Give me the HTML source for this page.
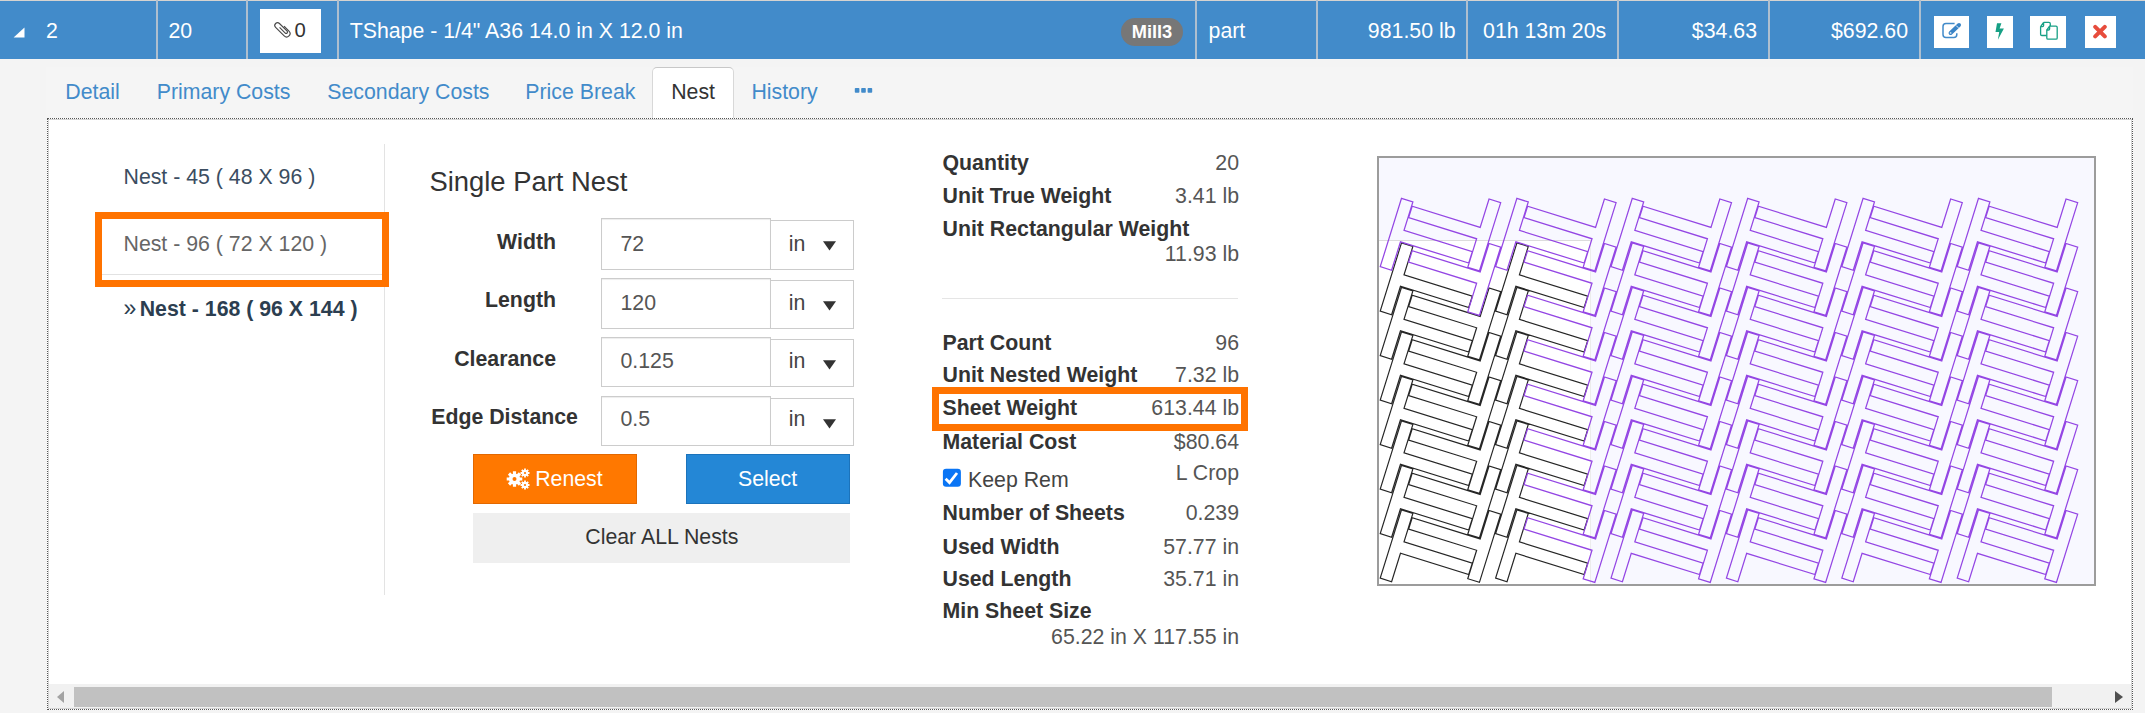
<!DOCTYPE html>
<html><head><meta charset="utf-8"><style>
html,body{margin:0;padding:0;width:2145px;height:713px;overflow:hidden;background:#f4f4f4}
body{position:relative;font-family:"Liberation Sans",sans-serif}
.t{position:absolute;white-space:nowrap}
.b{position:absolute}
</style></head><body>
<div class="b" style="left:0px;top:0px;width:2145px;height:1px;background:#d6d3d0"></div>
<div class="b" style="left:0px;top:1px;width:2145px;height:58px;background:#428bca"></div>
<div class="b" style="left:155.5px;top:0px;width:2.0px;height:59px;background:#aebfcf"></div>
<div class="b" style="left:246px;top:0px;width:2px;height:59px;background:#aebfcf"></div>
<div class="b" style="left:336.5px;top:0px;width:2.0px;height:59px;background:#aebfcf"></div>
<div class="b" style="left:1194.5px;top:0px;width:2.0px;height:59px;background:#aebfcf"></div>
<div class="b" style="left:1315.5px;top:0px;width:2.0px;height:59px;background:#aebfcf"></div>
<div class="b" style="left:1466px;top:0px;width:2px;height:59px;background:#aebfcf"></div>
<div class="b" style="left:1617px;top:0px;width:2px;height:59px;background:#aebfcf"></div>
<div class="b" style="left:1767.5px;top:0px;width:2.0px;height:59px;background:#aebfcf"></div>
<div class="b" style="left:1919px;top:0px;width:2px;height:59px;background:#aebfcf"></div>
<svg class="b" style="left:13px;top:27px" width="13" height="12"><polygon points="11.5,0.5 11.5,10.6 0.6,10.6" fill="#fff"/></svg>
<div class="t" style="left:46px;top:17.92px;font-size:21.3px;line-height:26px;font-weight:400;color:#fff;">2</div>
<div class="t" style="left:168.5px;top:17.92px;font-size:21.3px;line-height:26px;font-weight:400;color:#fff;">20</div>
<div class="b" style="left:260px;top:9px;width:61px;height:44px;background:#fff"></div>
<svg class="b" style="left:271px;top:19px" width="24" height="22" viewBox="0 0 24 22"><g transform="translate(11.3 10.2) rotate(-45) scale(0.92)"><path d="M-0.7 -3.5 V5.2 A1.45 1.45 0 0 0 2.2 5.2 V-6.6 A2.95 2.95 0 0 0 -3.7 -6.6 V6.6 A3.7 3.7 0 0 0 3.7 6.6 V-1" fill="none" stroke="#4a4a4a" stroke-width="1.25"/></g></svg>
<div class="t" style="left:294.4px;top:17.77px;font-size:20.29px;line-height:24px;font-weight:400;color:#333;">0</div>
<div class="t" style="left:349.7px;top:17.92px;font-size:21.3px;line-height:26px;font-weight:400;color:#fff;">TShape - 1/4&quot; A36 14.0 in X 12.0 in</div>
<div class="b" style="left:1121px;top:18px;width:62px;height:28px;background:#777;border-radius:14px"></div>
<div class="t" style="left:1121px;width:62px;text-align:center;top:21.47px;font-size:18.26px;line-height:22px;font-weight:700;color:#fff;">Mill3</div>
<div class="t" style="left:1208.6px;top:17.92px;font-size:21.3px;line-height:26px;font-weight:400;color:#fff;">part</div>
<div class="t" style="right:689.5px;top:18.12px;font-size:21.3px;line-height:26px;font-weight:400;color:#fff;">981.50 lb</div>
<div class="t" style="right:538.8px;top:18.12px;font-size:21.3px;line-height:26px;font-weight:400;color:#fff;">01h 13m 20s</div>
<div class="t" style="right:388px;top:18.12px;font-size:21.3px;line-height:26px;font-weight:400;color:#fff;">$34.63</div>
<div class="t" style="right:237px;top:18.12px;font-size:21.3px;line-height:26px;font-weight:400;color:#fff;">$692.60</div>
<div class="b" style="left:1934px;top:16px;width:35px;height:32px;background:#fff"></div>
<div class="b" style="left:1987px;top:16px;width:26px;height:32px;background:#fff"></div>
<div class="b" style="left:2030px;top:16px;width:36px;height:32px;background:#fff"></div>
<div class="b" style="left:2085px;top:16px;width:31px;height:32px;background:#fff"></div>
<svg class="b" style="left:1940px;top:21px" width="24" height="19" viewBox="0 0 24 19"><path d="M14.6 2.6 H6 Q3 2.6 3 5.6 V13.4 Q3 16.4 6 16.4 H13.8 Q16.8 16.4 16.8 13.4 V12.2" fill="none" stroke="#428bca" stroke-width="1.5"/><path d="M10.6 12.0 L19.0 4.0" stroke="#3a84c6" stroke-width="4" stroke-linecap="round"/><path d="M16.2 4.6 L18.4 6.8" stroke="#fff" stroke-width="0.9"/><circle cx="10.6" cy="11.9" r="0.9" fill="#cde"/></svg>
<svg class="b" style="left:1993px;top:22px" width="14" height="19" viewBox="0 0 14 19"><path d="M4 1.3 H8.4 L6.6 6.4 H10.9 L4.9 17.8 L6.2 9.9 H2.5 Z" fill="#16a085"/></svg>
<svg class="b" style="left:2038px;top:20px" width="22" height="22" viewBox="0 0 22 22"><g fill="none" stroke="#16a085" stroke-width="1.3"><path d="M5.6 2.4 H10.9 Q12.3 2.4 12.3 3.8 V6.2 M2.6 6.6 L5.6 2.4 M2.6 6.6 V14.3 Q2.6 15.5 3.8 15.5 H8.8 M2.6 6.6 H4.5 Q5.6 6.6 5.6 5.5 V2.4"/></g><path d="M11.6 6.2 H18 Q19.2 6.2 19.2 7.4 V17.9 Q19.2 19.1 18 19.1 H10 Q8.8 19.1 8.8 17.9 V10 Z" fill="#fff" stroke="#16a085" stroke-width="1.3"/><path d="M8.8 10 H10.5 Q11.6 10 11.6 8.9 V6.2" fill="none" stroke="#16a085" stroke-width="1.3"/></svg>
<svg class="b" style="left:2092px;top:24px" width="16" height="15" viewBox="0 0 16 15"><path d="M3.2 2.8 L12.8 12.4 M12.8 2.8 L3.2 12.4" stroke="#e74c3c" stroke-width="4" stroke-linecap="round"/></svg>
<div class="b" style="left:0px;top:59px;width:2145px;height:654px;background:#f4f4f4"></div>
<div class="b" style="left:46px;top:67px;width:2087px;height:52px;background:#f5f5f5"></div>
<div class="t" style="left:65.3px;top:78.62px;font-size:21.3px;line-height:26px;font-weight:400;color:#428bca;">Detail</div>
<div class="t" style="left:156.7px;top:78.62px;font-size:21.3px;line-height:26px;font-weight:400;color:#428bca;">Primary Costs</div>
<div class="t" style="left:327.3px;top:78.62px;font-size:21.3px;line-height:26px;font-weight:400;color:#428bca;">Secondary Costs</div>
<div class="t" style="left:525.3px;top:78.62px;font-size:21.3px;line-height:26px;font-weight:400;color:#428bca;">Price Break</div>
<div class="b" style="left:652px;top:67px;width:82px;height:53px;background:#fff;border:1px solid #d8d8d8;border-bottom:none;border-radius:5px 5px 0 0;box-sizing:border-box;border-top-color:#c8c8c8"></div>
<div class="t" style="left:671.2px;top:78.62px;font-size:21.3px;line-height:26px;font-weight:400;color:#333;">Nest</div>
<div class="t" style="left:751.4px;top:78.62px;font-size:21.3px;line-height:26px;font-weight:400;color:#428bca;">History</div>
<svg class="b" style="left:854px;top:87px" width="20" height="7"><rect x="0.8" y="1" width="4.6" height="4.8" rx="0.8" fill="#428bca"/><rect x="7.2" y="1" width="4.6" height="4.8" rx="0.8" fill="#428bca"/><rect x="13.6" y="1" width="4.6" height="4.8" rx="0.8" fill="#428bca"/></svg>
<div class="b" style="left:47px;top:118px;width:2086px;height:592px;background:#fff;border:1px dotted #555;box-sizing:border-box"></div>
<div class="b" style="left:48px;top:119px;width:2084px;height:590px;border:1px solid #d4d4d4;box-sizing:border-box"></div>
<div class="b" style="left:49px;top:684px;width:2082px;height:24px;background:#f1f1f1"></div>
<div class="b" style="left:73.5px;top:687px;width:1978.5px;height:20px;background:#c1c1c1"></div>
<svg class="b" style="left:56px;top:690px" width="10" height="14"><polygon points="8,1 8,13 1,7" fill="#a3a3a3"/></svg>
<svg class="b" style="left:2114px;top:690px" width="10" height="14"><polygon points="1,1 1,13 9,7" fill="#505050"/></svg>
<div class="t" style="left:123.5px;top:164.12px;font-size:21.3px;line-height:26px;font-weight:400;color:#3b4d61;">Nest - 45 ( 48 X 96 )</div>
<div class="b" style="left:102px;top:273.5px;width:280px;height:1.0px;background:#e2e2e2"></div>
<div class="t" style="left:123.5px;top:230.52px;font-size:21.3px;line-height:26px;font-weight:400;color:#666;">Nest - 96 ( 72 X 120 )</div>
<div class="t" style="left:123.5px;top:295.42px;font-size:21.3px;line-height:26px;font-weight:700;color:#2c3e50;"><span style="font-weight:400;font-size:23px;letter-spacing:-2.5px">&raquo;</span> Nest - 168 ( 96 X 144 )</div>
<div class="b" style="left:384px;top:144px;width:1px;height:451px;background:#e3e3e3"></div>
<div class="b" style="left:95px;top:212px;width:294px;height:75px;border:7px solid #ff7300;box-sizing:border-box"></div>
<div class="t" style="left:429.5px;top:164.80px;font-size:27.39px;line-height:33px;font-weight:400;color:#333;">Single Part Nest</div>
<div class="t" style="right:1589px;top:228.62px;font-size:21.3px;line-height:26px;font-weight:700;color:#333;">Width</div>
<div class="b" style="left:601px;top:218px;width:169.5px;height:52px;background:#fff;border:1px solid #ccc;box-sizing:border-box;box-shadow:inset 0 1px 1px rgba(0,0,0,.075)"></div>
<div class="b" style="left:769.5px;top:219.5px;width:84.5px;height:50.5px;background:#fff;border:1px solid #ccc;box-sizing:border-box"></div>
<div class="t" style="left:620.5px;top:230.62px;font-size:21.3px;line-height:26px;font-weight:400;color:#555;">72</div>
<div class="t" style="left:788.7px;top:230.62px;font-size:21.3px;line-height:26px;font-weight:400;color:#444;">in</div>
<svg class="b" style="left:822.5px;top:241px" width="13" height="10"><polygon points="0,0.3 13,0.3 6.5,9.5" fill="#333"/></svg>
<div class="t" style="right:1589px;top:287.12px;font-size:21.3px;line-height:26px;font-weight:700;color:#333;">Length</div>
<div class="b" style="left:601px;top:278px;width:169.5px;height:51px;background:#fff;border:1px solid #ccc;box-sizing:border-box;box-shadow:inset 0 1px 1px rgba(0,0,0,.075)"></div>
<div class="b" style="left:769.5px;top:279.5px;width:84.5px;height:49.5px;background:#fff;border:1px solid #ccc;box-sizing:border-box"></div>
<div class="t" style="left:620.5px;top:289.62px;font-size:21.3px;line-height:26px;font-weight:400;color:#555;">120</div>
<div class="t" style="left:788.7px;top:289.62px;font-size:21.3px;line-height:26px;font-weight:400;color:#444;">in</div>
<svg class="b" style="left:822.5px;top:301px" width="13" height="10"><polygon points="0,0.3 13,0.3 6.5,9.5" fill="#333"/></svg>
<div class="t" style="right:1589px;top:346.32px;font-size:21.3px;line-height:26px;font-weight:700;color:#333;">Clearance</div>
<div class="b" style="left:601px;top:337px;width:169.5px;height:50px;background:#fff;border:1px solid #ccc;box-sizing:border-box;box-shadow:inset 0 1px 1px rgba(0,0,0,.075)"></div>
<div class="b" style="left:769.5px;top:338.5px;width:84.5px;height:48.5px;background:#fff;border:1px solid #ccc;box-sizing:border-box"></div>
<div class="t" style="left:620.5px;top:348.22px;font-size:21.3px;line-height:26px;font-weight:400;color:#555;">0.125</div>
<div class="t" style="left:788.7px;top:348.22px;font-size:21.3px;line-height:26px;font-weight:400;color:#444;">in</div>
<svg class="b" style="left:822.5px;top:360px" width="13" height="10"><polygon points="0,0.3 13,0.3 6.5,9.5" fill="#333"/></svg>
<div class="t" style="left:431.2px;top:403.62px;font-size:21.3px;line-height:26px;font-weight:700;color:#333;">Edge Distance</div>
<div class="b" style="left:601px;top:396px;width:169.5px;height:50px;background:#fff;border:1px solid #ccc;box-sizing:border-box;box-shadow:inset 0 1px 1px rgba(0,0,0,.075)"></div>
<div class="b" style="left:769.5px;top:397.5px;width:84.5px;height:48.5px;background:#fff;border:1px solid #ccc;box-sizing:border-box"></div>
<div class="t" style="left:620.5px;top:406.22px;font-size:21.3px;line-height:26px;font-weight:400;color:#555;">0.5</div>
<div class="t" style="left:788.7px;top:406.22px;font-size:21.3px;line-height:26px;font-weight:400;color:#444;">in</div>
<svg class="b" style="left:822.5px;top:419px" width="13" height="10"><polygon points="0,0.3 13,0.3 6.5,9.5" fill="#333"/></svg>
<div class="b" style="left:473px;top:454px;width:164px;height:50px;background:#ff7800;border:1px solid #e26800;box-sizing:border-box"></div>
<div class="b" style="left:685.5px;top:454px;width:164.0px;height:50px;background:#2487d6;border:1px solid #1b73bb;box-sizing:border-box"></div>
<div class="b" style="left:473px;top:513px;width:376.5px;height:50px;background:#efefef"></div>
<svg class="b" style="left:506px;top:468px" width="26" height="22" viewBox="0 0 26 22"><g fill="#fff"><circle cx="8.5" cy="11" r="5.6"/><g stroke="#fff" stroke-width="3.2" stroke-linecap="butt"><path d="M8.5 3.2 V18.8 M0.7 11 H16.3 M3 5.5 L14 16.5 M14 5.5 L3 16.5"/></g><circle cx="19" cy="5" r="3.2"/><g stroke="#fff" stroke-width="1.8"><path d="M19 0.5 V9.5 M14.5 5 H23.5 M15.8 1.8 L22.2 8.2 M22.2 1.8 L15.8 8.2"/></g><circle cx="19" cy="17" r="3.2"/><g stroke="#fff" stroke-width="1.8"><path d="M19 12.5 V21.5 M14.5 17 H23.5 M15.8 13.8 L22.2 20.2 M22.2 13.8 L15.8 20.2"/></g></g><circle cx="8.5" cy="11" r="2" fill="#ff7800"/><circle cx="19" cy="5" r="1.1" fill="#ff7800"/><circle cx="19" cy="17" r="1.1" fill="#ff7800"/></svg>
<div class="t" style="left:535.2px;top:466.02px;font-size:21.3px;line-height:26px;font-weight:400;color:#fff;">Renest</div>
<div class="t" style="left:738px;top:466.02px;font-size:21.3px;line-height:26px;font-weight:400;color:#fff;">Select</div>
<div class="t" style="left:585.3px;top:523.62px;font-size:21.3px;line-height:26px;font-weight:400;color:#333;">Clear ALL Nests</div>
<div class="t" style="left:942.5px;top:149.62px;font-size:21.3px;line-height:26px;font-weight:700;color:#333;">Quantity</div>
<div class="t" style="right:906px;top:149.62px;font-size:21.3px;line-height:26px;font-weight:400;color:#555;">20</div>
<div class="t" style="left:942.5px;top:183.02px;font-size:21.3px;line-height:26px;font-weight:700;color:#333;">Unit True Weight</div>
<div class="t" style="right:906px;top:183.02px;font-size:21.3px;line-height:26px;font-weight:400;color:#555;">3.41 lb</div>
<div class="t" style="left:942.5px;top:215.72px;font-size:21.3px;line-height:26px;font-weight:700;color:#333;">Unit Rectangular Weight</div>
<div class="t" style="right:906px;top:241.12px;font-size:21.3px;line-height:26px;font-weight:400;color:#555;">11.93 lb</div>
<div class="b" style="left:942px;top:297.5px;width:296px;height:1.0px;background:#e5e5e5"></div>
<div class="t" style="left:942.5px;top:330.22px;font-size:21.3px;line-height:26px;font-weight:700;color:#333;">Part Count</div>
<div class="t" style="right:906px;top:330.22px;font-size:21.3px;line-height:26px;font-weight:400;color:#555;">96</div>
<div class="t" style="left:942.5px;top:362.22px;font-size:21.3px;line-height:26px;font-weight:700;color:#333;">Unit Nested Weight</div>
<div class="t" style="right:906px;top:362.22px;font-size:21.3px;line-height:26px;font-weight:400;color:#555;">7.32 lb</div>
<div class="t" style="left:942.5px;top:394.62px;font-size:21.3px;line-height:26px;font-weight:700;color:#333;">Sheet Weight</div>
<div class="t" style="right:906px;top:394.62px;font-size:21.3px;line-height:26px;font-weight:400;color:#555;">613.44 lb</div>
<div class="b" style="left:932px;top:387px;width:316px;height:44px;border:7px solid #ff7300;box-sizing:border-box"></div>
<div class="t" style="left:942.5px;top:428.62px;font-size:21.3px;line-height:26px;font-weight:700;color:#333;">Material Cost</div>
<div class="t" style="right:906px;top:428.62px;font-size:21.3px;line-height:26px;font-weight:400;color:#555;">$80.64</div>
<svg class="b" style="left:942px;top:467.5px" width="20" height="20" viewBox="0 0 20 20"><rect x="0.9" y="0.7" width="18" height="18" rx="3.2" fill="#0a75f5"/><path d="M3.6 10.8 L7.5 14.6 L15 5" fill="none" stroke="#fff" stroke-width="2.8"/></svg>
<div class="t" style="left:968px;top:467.22px;font-size:21.3px;line-height:26px;font-weight:400;color:#444;">Keep Rem</div>
<div class="t" style="right:906px;top:459.92px;font-size:21.3px;line-height:26px;font-weight:400;color:#555;">L Crop</div>
<div class="t" style="left:942.5px;top:499.52px;font-size:21.3px;line-height:26px;font-weight:700;color:#333;">Number of Sheets</div>
<div class="t" style="right:906px;top:499.52px;font-size:21.3px;line-height:26px;font-weight:400;color:#555;">0.239</div>
<div class="t" style="left:942.5px;top:533.52px;font-size:21.3px;line-height:26px;font-weight:700;color:#333;">Used Width</div>
<div class="t" style="right:906px;top:533.52px;font-size:21.3px;line-height:26px;font-weight:400;color:#555;">57.77 in</div>
<div class="t" style="left:942.5px;top:566.22px;font-size:21.3px;line-height:26px;font-weight:700;color:#333;">Used Length</div>
<div class="t" style="right:906px;top:566.22px;font-size:21.3px;line-height:26px;font-weight:400;color:#555;">35.71 in</div>
<div class="t" style="left:942.5px;top:598.42px;font-size:21.3px;line-height:26px;font-weight:700;color:#333;">Min Sheet Size</div>
<div class="t" style="right:906px;top:623.52px;font-size:21.3px;line-height:26px;font-weight:400;color:#555;">65.22 in X 117.55 in</div>
<div class="b" style="left:1377px;top:156px;width:719px;height:430px;background:#f8f8ff;border:2px solid #9c9c9c;box-sizing:border-box"></div>
<div class="b" style="left:1379px;top:240.3px;width:212px;height:343.7px;background:#fff;border-top:1px solid #dcdcdc;border-right:1px solid #ececec;box-sizing:border-box"></div>
<svg class="b" style="left:1377px;top:156px" width="719" height="430" viewBox="0 0 719 430"><path d="M24.50 86.90 L35.88 90.44 L27.02 118.90 L95.30 140.16 L91.76 151.55 L23.47 130.28 L14.61 158.73 L3.23 155.18 Z M24.50 131.40 L35.88 134.94 L27.02 163.40 L95.30 184.66 L91.76 196.05 L23.47 174.78 L14.61 203.23 L3.23 199.68 Z M123.70 135.58 L102.43 203.86 L90.77 200.23 L99.63 171.78 L31.63 150.60 L35.17 139.22 L103.17 160.40 L112.04 131.95 Z M24.50 175.90 L35.88 179.44 L27.02 207.90 L95.30 229.16 L91.76 240.55 L23.47 219.28 L14.61 247.73 L3.23 244.18 Z M123.70 180.08 L102.43 248.36 L90.77 244.73 L99.63 216.28 L31.63 195.10 L35.17 183.72 L103.17 204.90 L112.04 176.45 Z M24.50 220.40 L35.88 223.94 L27.02 252.40 L95.30 273.66 L91.76 285.05 L23.47 263.78 L14.61 292.23 L3.23 288.68 Z M123.70 224.58 L102.43 292.86 L90.77 289.23 L99.63 260.78 L31.63 239.60 L35.17 228.22 L103.17 249.40 L112.04 220.95 Z M24.50 264.90 L35.88 268.44 L27.02 296.90 L95.30 318.16 L91.76 329.55 L23.47 308.28 L14.61 336.73 L3.23 333.18 Z M123.70 269.08 L102.43 337.36 L90.77 333.73 L99.63 305.28 L31.63 284.10 L35.17 272.72 L103.17 293.90 L112.04 265.45 Z M24.50 309.40 L35.88 312.94 L27.02 341.40 L95.30 362.66 L91.76 374.05 L23.47 352.78 L14.61 381.23 L3.23 377.68 Z M123.70 313.58 L102.43 381.86 L90.77 378.23 L99.63 349.78 L31.63 328.60 L35.17 317.22 L103.17 338.40 L112.04 309.95 Z M24.50 353.90 L35.88 357.44 L27.02 385.90 L95.30 407.16 L91.76 418.55 L23.47 397.28 L14.61 425.73 L3.23 422.18 Z M123.70 358.08 L102.43 426.36 L90.77 422.73 L99.63 394.28 L31.63 373.10 L35.17 361.72 L103.17 382.90 L112.04 354.45 Z M139.90 86.90 L151.28 90.44 L142.42 118.90 L210.70 140.16 L207.16 151.55 L138.87 130.28 L130.01 158.73 L118.63 155.18 Z M139.90 131.40 L151.28 134.94 L142.42 163.40 L210.70 184.66 L207.16 196.05 L138.87 174.78 L130.01 203.23 L118.63 199.68 Z M139.90 175.90 L151.28 179.44 L142.42 207.90 L210.70 229.16 L207.16 240.55 L138.87 219.28 L130.01 247.73 L118.63 244.18 Z M139.90 220.40 L151.28 223.94 L142.42 252.40 L210.70 273.66 L207.16 285.05 L138.87 263.78 L130.01 292.23 L118.63 288.68 Z M139.90 264.90 L151.28 268.44 L142.42 296.90 L210.70 318.16 L207.16 329.55 L138.87 308.28 L130.01 336.73 L118.63 333.18 Z M139.90 309.40 L151.28 312.94 L142.42 341.40 L210.70 362.66 L207.16 374.05 L138.87 352.78 L130.01 381.23 L118.63 377.68 Z M139.90 353.90 L151.28 357.44 L142.42 385.90 L210.70 407.16 L207.16 418.55 L138.87 397.28 L130.01 425.73 L118.63 422.18 Z" fill="none" stroke="#262626" stroke-width="1.2"/><path d="M24.50 42.40 L35.88 45.94 L27.02 74.40 L95.30 95.66 L91.76 107.05 L23.47 85.78 L14.61 114.23 L3.23 110.68 Z M123.70 46.58 L102.43 114.86 L90.77 111.23 L99.63 82.78 L31.63 61.60 L35.17 50.22 L103.17 71.40 L112.04 42.95 Z M123.70 91.08 L102.43 159.36 L90.77 155.73 L99.63 127.28 L31.63 106.10 L35.17 94.72 L103.17 115.90 L112.04 87.45 Z M139.90 42.40 L151.28 45.94 L142.42 74.40 L210.70 95.66 L207.16 107.05 L138.87 85.78 L130.01 114.23 L118.63 110.68 Z M239.10 46.58 L217.83 114.86 L206.17 111.23 L215.03 82.78 L147.03 61.60 L150.57 50.22 L218.57 71.40 L227.44 42.95 Z M239.10 91.08 L217.83 159.36 L206.17 155.73 L215.03 127.28 L147.03 106.10 L150.57 94.72 L218.57 115.90 L227.44 87.45 Z M239.10 135.58 L217.83 203.86 L206.17 200.23 L215.03 171.78 L147.03 150.60 L150.57 139.22 L218.57 160.40 L227.44 131.95 Z M239.10 180.08 L217.83 248.36 L206.17 244.73 L215.03 216.28 L147.03 195.10 L150.57 183.72 L218.57 204.90 L227.44 176.45 Z M239.10 224.58 L217.83 292.86 L206.17 289.23 L215.03 260.78 L147.03 239.60 L150.57 228.22 L218.57 249.40 L227.44 220.95 Z M239.10 269.08 L217.83 337.36 L206.17 333.73 L215.03 305.28 L147.03 284.10 L150.57 272.72 L218.57 293.90 L227.44 265.45 Z M239.10 313.58 L217.83 381.86 L206.17 378.23 L215.03 349.78 L147.03 328.60 L150.57 317.22 L218.57 338.40 L227.44 309.95 Z M239.10 358.08 L217.83 426.36 L206.17 422.73 L215.03 394.28 L147.03 373.10 L150.57 361.72 L218.57 382.90 L227.44 354.45 Z M255.30 42.40 L266.68 45.94 L257.82 74.40 L326.10 95.66 L322.56 107.05 L254.27 85.78 L245.41 114.23 L234.03 110.68 Z M354.50 46.58 L333.23 114.86 L321.57 111.23 L330.43 82.78 L262.43 61.60 L265.97 50.22 L333.97 71.40 L342.84 42.95 Z M255.30 86.90 L266.68 90.44 L257.82 118.90 L326.10 140.16 L322.56 151.55 L254.27 130.28 L245.41 158.73 L234.03 155.18 Z M354.50 91.08 L333.23 159.36 L321.57 155.73 L330.43 127.28 L262.43 106.10 L265.97 94.72 L333.97 115.90 L342.84 87.45 Z M255.30 131.40 L266.68 134.94 L257.82 163.40 L326.10 184.66 L322.56 196.05 L254.27 174.78 L245.41 203.23 L234.03 199.68 Z M354.50 135.58 L333.23 203.86 L321.57 200.23 L330.43 171.78 L262.43 150.60 L265.97 139.22 L333.97 160.40 L342.84 131.95 Z M255.30 175.90 L266.68 179.44 L257.82 207.90 L326.10 229.16 L322.56 240.55 L254.27 219.28 L245.41 247.73 L234.03 244.18 Z M354.50 180.08 L333.23 248.36 L321.57 244.73 L330.43 216.28 L262.43 195.10 L265.97 183.72 L333.97 204.90 L342.84 176.45 Z M255.30 220.40 L266.68 223.94 L257.82 252.40 L326.10 273.66 L322.56 285.05 L254.27 263.78 L245.41 292.23 L234.03 288.68 Z M354.50 224.58 L333.23 292.86 L321.57 289.23 L330.43 260.78 L262.43 239.60 L265.97 228.22 L333.97 249.40 L342.84 220.95 Z M255.30 264.90 L266.68 268.44 L257.82 296.90 L326.10 318.16 L322.56 329.55 L254.27 308.28 L245.41 336.73 L234.03 333.18 Z M354.50 269.08 L333.23 337.36 L321.57 333.73 L330.43 305.28 L262.43 284.10 L265.97 272.72 L333.97 293.90 L342.84 265.45 Z M255.30 309.40 L266.68 312.94 L257.82 341.40 L326.10 362.66 L322.56 374.05 L254.27 352.78 L245.41 381.23 L234.03 377.68 Z M354.50 313.58 L333.23 381.86 L321.57 378.23 L330.43 349.78 L262.43 328.60 L265.97 317.22 L333.97 338.40 L342.84 309.95 Z M255.30 353.90 L266.68 357.44 L257.82 385.90 L326.10 407.16 L322.56 418.55 L254.27 397.28 L245.41 425.73 L234.03 422.18 Z M354.50 358.08 L333.23 426.36 L321.57 422.73 L330.43 394.28 L262.43 373.10 L265.97 361.72 L333.97 382.90 L342.84 354.45 Z M370.70 42.40 L382.08 45.94 L373.22 74.40 L441.50 95.66 L437.96 107.05 L369.67 85.78 L360.81 114.23 L349.43 110.68 Z M469.90 46.58 L448.63 114.86 L436.97 111.23 L445.83 82.78 L377.83 61.60 L381.37 50.22 L449.37 71.40 L458.24 42.95 Z M370.70 86.90 L382.08 90.44 L373.22 118.90 L441.50 140.16 L437.96 151.55 L369.67 130.28 L360.81 158.73 L349.43 155.18 Z M469.90 91.08 L448.63 159.36 L436.97 155.73 L445.83 127.28 L377.83 106.10 L381.37 94.72 L449.37 115.90 L458.24 87.45 Z M370.70 131.40 L382.08 134.94 L373.22 163.40 L441.50 184.66 L437.96 196.05 L369.67 174.78 L360.81 203.23 L349.43 199.68 Z M469.90 135.58 L448.63 203.86 L436.97 200.23 L445.83 171.78 L377.83 150.60 L381.37 139.22 L449.37 160.40 L458.24 131.95 Z M370.70 175.90 L382.08 179.44 L373.22 207.90 L441.50 229.16 L437.96 240.55 L369.67 219.28 L360.81 247.73 L349.43 244.18 Z M469.90 180.08 L448.63 248.36 L436.97 244.73 L445.83 216.28 L377.83 195.10 L381.37 183.72 L449.37 204.90 L458.24 176.45 Z M370.70 220.40 L382.08 223.94 L373.22 252.40 L441.50 273.66 L437.96 285.05 L369.67 263.78 L360.81 292.23 L349.43 288.68 Z M469.90 224.58 L448.63 292.86 L436.97 289.23 L445.83 260.78 L377.83 239.60 L381.37 228.22 L449.37 249.40 L458.24 220.95 Z M370.70 264.90 L382.08 268.44 L373.22 296.90 L441.50 318.16 L437.96 329.55 L369.67 308.28 L360.81 336.73 L349.43 333.18 Z M469.90 269.08 L448.63 337.36 L436.97 333.73 L445.83 305.28 L377.83 284.10 L381.37 272.72 L449.37 293.90 L458.24 265.45 Z M370.70 309.40 L382.08 312.94 L373.22 341.40 L441.50 362.66 L437.96 374.05 L369.67 352.78 L360.81 381.23 L349.43 377.68 Z M469.90 313.58 L448.63 381.86 L436.97 378.23 L445.83 349.78 L377.83 328.60 L381.37 317.22 L449.37 338.40 L458.24 309.95 Z M370.70 353.90 L382.08 357.44 L373.22 385.90 L441.50 407.16 L437.96 418.55 L369.67 397.28 L360.81 425.73 L349.43 422.18 Z M469.90 358.08 L448.63 426.36 L436.97 422.73 L445.83 394.28 L377.83 373.10 L381.37 361.72 L449.37 382.90 L458.24 354.45 Z M486.10 42.40 L497.48 45.94 L488.62 74.40 L556.90 95.66 L553.36 107.05 L485.07 85.78 L476.21 114.23 L464.83 110.68 Z M585.30 46.58 L564.03 114.86 L552.37 111.23 L561.23 82.78 L493.23 61.60 L496.77 50.22 L564.77 71.40 L573.64 42.95 Z M486.10 86.90 L497.48 90.44 L488.62 118.90 L556.90 140.16 L553.36 151.55 L485.07 130.28 L476.21 158.73 L464.83 155.18 Z M585.30 91.08 L564.03 159.36 L552.37 155.73 L561.23 127.28 L493.23 106.10 L496.77 94.72 L564.77 115.90 L573.64 87.45 Z M486.10 131.40 L497.48 134.94 L488.62 163.40 L556.90 184.66 L553.36 196.05 L485.07 174.78 L476.21 203.23 L464.83 199.68 Z M585.30 135.58 L564.03 203.86 L552.37 200.23 L561.23 171.78 L493.23 150.60 L496.77 139.22 L564.77 160.40 L573.64 131.95 Z M486.10 175.90 L497.48 179.44 L488.62 207.90 L556.90 229.16 L553.36 240.55 L485.07 219.28 L476.21 247.73 L464.83 244.18 Z M585.30 180.08 L564.03 248.36 L552.37 244.73 L561.23 216.28 L493.23 195.10 L496.77 183.72 L564.77 204.90 L573.64 176.45 Z M486.10 220.40 L497.48 223.94 L488.62 252.40 L556.90 273.66 L553.36 285.05 L485.07 263.78 L476.21 292.23 L464.83 288.68 Z M585.30 224.58 L564.03 292.86 L552.37 289.23 L561.23 260.78 L493.23 239.60 L496.77 228.22 L564.77 249.40 L573.64 220.95 Z M486.10 264.90 L497.48 268.44 L488.62 296.90 L556.90 318.16 L553.36 329.55 L485.07 308.28 L476.21 336.73 L464.83 333.18 Z M585.30 269.08 L564.03 337.36 L552.37 333.73 L561.23 305.28 L493.23 284.10 L496.77 272.72 L564.77 293.90 L573.64 265.45 Z M486.10 309.40 L497.48 312.94 L488.62 341.40 L556.90 362.66 L553.36 374.05 L485.07 352.78 L476.21 381.23 L464.83 377.68 Z M585.30 313.58 L564.03 381.86 L552.37 378.23 L561.23 349.78 L493.23 328.60 L496.77 317.22 L564.77 338.40 L573.64 309.95 Z M486.10 353.90 L497.48 357.44 L488.62 385.90 L556.90 407.16 L553.36 418.55 L485.07 397.28 L476.21 425.73 L464.83 422.18 Z M585.30 358.08 L564.03 426.36 L552.37 422.73 L561.23 394.28 L493.23 373.10 L496.77 361.72 L564.77 382.90 L573.64 354.45 Z M601.50 42.40 L612.88 45.94 L604.02 74.40 L672.30 95.66 L668.76 107.05 L600.47 85.78 L591.61 114.23 L580.23 110.68 Z M700.70 46.58 L679.43 114.86 L667.77 111.23 L676.63 82.78 L608.63 61.60 L612.17 50.22 L680.17 71.40 L689.04 42.95 Z M601.50 86.90 L612.88 90.44 L604.02 118.90 L672.30 140.16 L668.76 151.55 L600.47 130.28 L591.61 158.73 L580.23 155.18 Z M700.70 91.08 L679.43 159.36 L667.77 155.73 L676.63 127.28 L608.63 106.10 L612.17 94.72 L680.17 115.90 L689.04 87.45 Z M601.50 131.40 L612.88 134.94 L604.02 163.40 L672.30 184.66 L668.76 196.05 L600.47 174.78 L591.61 203.23 L580.23 199.68 Z M700.70 135.58 L679.43 203.86 L667.77 200.23 L676.63 171.78 L608.63 150.60 L612.17 139.22 L680.17 160.40 L689.04 131.95 Z M601.50 175.90 L612.88 179.44 L604.02 207.90 L672.30 229.16 L668.76 240.55 L600.47 219.28 L591.61 247.73 L580.23 244.18 Z M700.70 180.08 L679.43 248.36 L667.77 244.73 L676.63 216.28 L608.63 195.10 L612.17 183.72 L680.17 204.90 L689.04 176.45 Z M601.50 220.40 L612.88 223.94 L604.02 252.40 L672.30 273.66 L668.76 285.05 L600.47 263.78 L591.61 292.23 L580.23 288.68 Z M700.70 224.58 L679.43 292.86 L667.77 289.23 L676.63 260.78 L608.63 239.60 L612.17 228.22 L680.17 249.40 L689.04 220.95 Z M601.50 264.90 L612.88 268.44 L604.02 296.90 L672.30 318.16 L668.76 329.55 L600.47 308.28 L591.61 336.73 L580.23 333.18 Z M700.70 269.08 L679.43 337.36 L667.77 333.73 L676.63 305.28 L608.63 284.10 L612.17 272.72 L680.17 293.90 L689.04 265.45 Z M601.50 309.40 L612.88 312.94 L604.02 341.40 L672.30 362.66 L668.76 374.05 L600.47 352.78 L591.61 381.23 L580.23 377.68 Z M700.70 313.58 L679.43 381.86 L667.77 378.23 L676.63 349.78 L608.63 328.60 L612.17 317.22 L680.17 338.40 L689.04 309.95 Z M601.50 353.90 L612.88 357.44 L604.02 385.90 L672.30 407.16 L668.76 418.55 L600.47 397.28 L591.61 425.73 L580.23 422.18 Z M700.70 358.08 L679.43 426.36 L667.77 422.73 L676.63 394.28 L608.63 373.10 L612.17 361.72 L680.17 382.90 L689.04 354.45 Z" fill="none" stroke="#9446e4" stroke-width="1.25"/></svg>
</body></html>
